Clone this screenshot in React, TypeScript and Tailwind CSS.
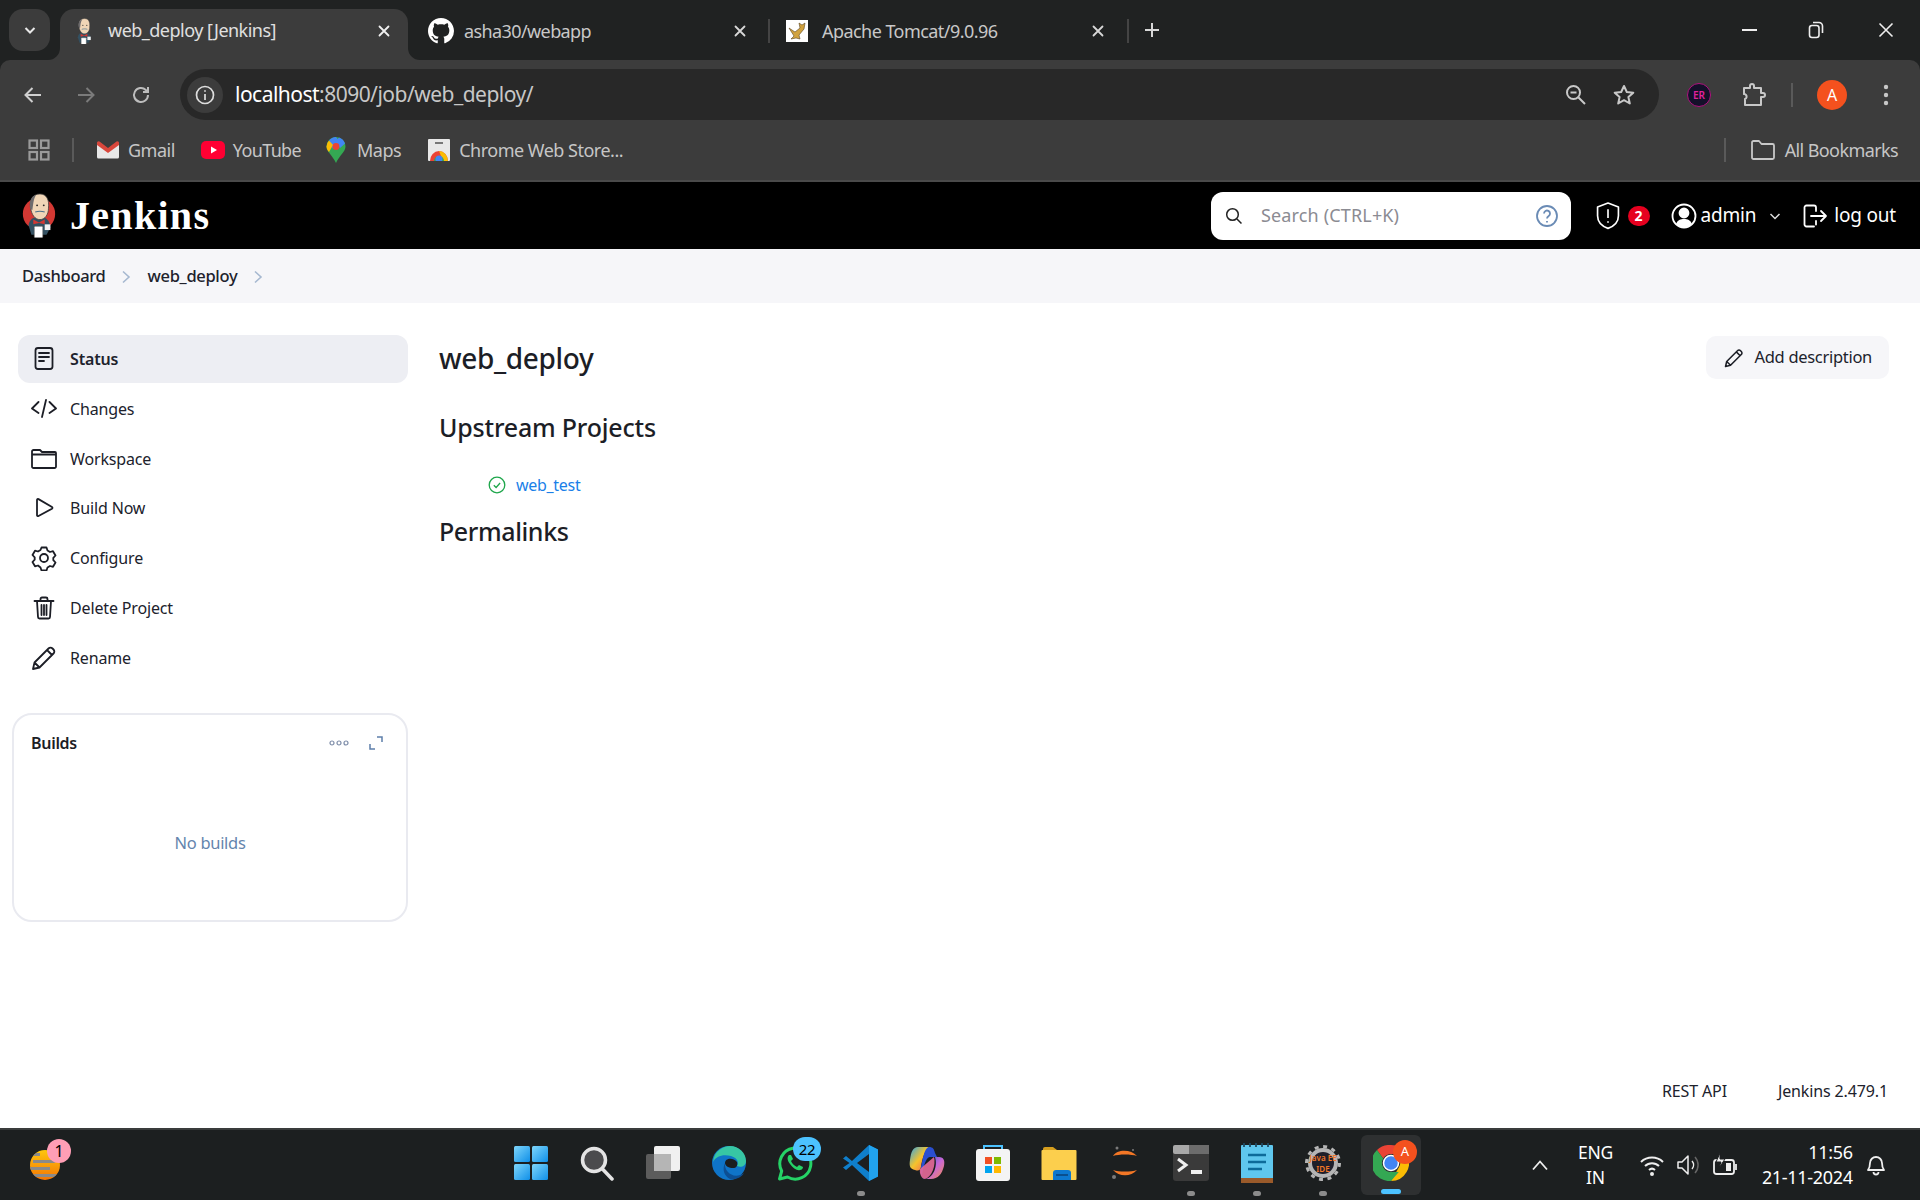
import React from "react";

const ui = "font-['Noto_Sans',sans-serif]";

function JenkinsHead({ size = 40, plain = false }: { size?: number; plain?: boolean }) {
  return (
    <svg width={size} height={plain ? 26 : size * 1.2} viewBox={plain ? "3 0 34 46" : "0 0 40 48"}>
      {!plain && <circle cx="20" cy="22" r="17" fill="#d33833" />}
      <path d="M9 34 C10 27 15 25 20 25 C26 25 31 27 32 36 L28 44 L12 44 Z" fill="#335061" />
      <path d="M11 15 C10 6 14 1 21 1 C28 1 31 7 30 16 C30 23 26 28 21 28 C16 28 12 23 11 15 Z" fill="#f0d6b7" stroke="#3a3a3a" strokeWidth="0.8" />
      <path d="M11 17 C9 9 12 3 17 2 C14 6 14 12 13 18 Z" fill="#6d6b6d" />
      <path d="M16 20 C19 19 23 19 26 20" stroke="#49728b" strokeWidth="1.2" fill="none" />
      <circle cx="18" cy="13" r="1" fill="#2a2a2a" />
      <circle cx="25" cy="13" r="1" fill="#2a2a2a" />
      <path d="M14 28 L20 31 L26 28 L26 33 L20 31.5 L14 33 Z" fill="#d33833" />
      <rect x="15" y="35" width="9" height="12" rx="1" fill="#ffffff" stroke="#555" strokeWidth="0.6" />
      <rect x="26" y="33" width="6" height="6" fill="#f2f2f2" />
    </svg>
  );
}

function GitHubMark() {
  return (
    <svg width="26" height="26" viewBox="0 0 16 16" fill="#fff">
      <path d="M8 0C3.58 0 0 3.58 0 8c0 3.54 2.29 6.53 5.47 7.59.4.07.55-.17.55-.38 0-.19-.01-.82-.01-1.49-2.01.37-2.53-.49-2.69-.94-.09-.23-.48-.94-.82-1.13-.28-.15-.68-.52-.01-.53.63-.01 1.08.58 1.23.82.72 1.21 1.87.87 2.33.66.07-.52.28-.87.51-1.07-1.78-.2-3.64-.89-3.64-3.95 0-.87.31-1.59.82-2.15-.08-.2-.36-1.02.08-2.12 0 0 .67-.21 2.2.82.64-.18 1.32-.27 2-.27s1.36.09 2 .27c1.53-1.04 2.2-.82 2.2-.82.44 1.1.16 1.92.08 2.12.51.56.82 1.27.82 2.15 0 3.07-1.87 3.75-3.65 3.95.29.25.54.73.54 1.48 0 1.07-.01 1.93-.01 2.2 0 .21.15.46.55.38A8.01 8.01 0 0 0 16 8c0-4.42-3.58-8-8-8z" />
    </svg>
  );
}

function CloseX({ c = "#d8d8d8" }: { c?: string }) {
  return (
    <svg width="14" height="14" viewBox="0 0 14 14" stroke={c} strokeWidth="1.8" strokeLinecap="round">
      <path d="M2.5 2.5l9 9M11.5 2.5l-9 9" />
    </svg>
  );
}

function TabGithub() {
  return (
    <div className="flex h-[48px] w-[362px] shrink-0 items-center pb-[10px] pl-[20px]">
      <GitHubMark />
      <span className="ml-[10px] flex-1 text-[18px] tracking-[-0.6px] text-[#c8c8c8]">asha30/webapp</span>
      <CloseX />
      <div className="ml-[21px] h-[24px] w-[2px] bg-[#444444]" />
    </div>
  );
}

function TabTomcat() {
  return (
    <div className="flex h-[48px] w-[359px] shrink-0 items-center pb-[10px] pl-[16px]">
      <svg width="22" height="22" viewBox="0 0 22 22">
        <rect width="22" height="22" fill="#fff" />
        <path d="M3 8L8 16 5 19 10 18 14 19 13 15 18 9 19 3 16 5 13 3 14 8 9 12z" fill="#d1a23e" stroke="#5b4520" strokeWidth="0.6" />
      </svg>
      <span className="ml-[14px] flex-1 text-[18px] tracking-[-0.55px] text-[#c8c8c8]">Apache Tomcat/9.0.96</span>
      <CloseX />
      <div className="ml-[22px] h-[24px] w-[2px] bg-[#444444]" />
    </div>
  );
}

function TopChrome() {
  return (
    <div className={`${ui} shrink-0 bg-[#202222]`}>
      {/* tab strip */}
      <div className="flex h-[60px] items-end pl-[9px]">
        <div className="mb-[9px] flex h-[42px] w-[41px] items-center justify-center rounded-[14px] bg-[#3c3c3c]">
          <svg width="14" height="14" viewBox="0 0 14 14" fill="none" stroke="#e8e8e8" strokeWidth="2"><path d="M2.5 5l4.500 4.500L11.500 5" /></svg>
        </div>
        <div className="relative ml-[10px] flex h-[51px] w-[348px] items-center rounded-t-[14px] bg-[#3c3c3c] pb-[8px] pl-[14px] pr-[17px]">
          <svg className="absolute bottom-0 left-[-12px]" width="12" height="12" viewBox="0 0 12 12" fill="#3c3c3c"><path d="M12 0v12H0A12 12 0 0 0 12 0z" /></svg>
          <svg className="absolute bottom-0 right-[-12px]" width="12" height="12" viewBox="0 0 12 12" fill="#3c3c3c"><path d="M0 0v12h12A12 12 0 0 1 0 0z" /></svg>
          <JenkinsHead size={20} plain />
          <span className="ml-[14px] flex-1 text-[18px] tracking-[-0.52px] text-[#e0e0e0]">web_deploy [Jenkins]</span>
          <CloseX c="#f0f0f0" />
        </div>
        <TabGithub />
        <TabTomcat />
        <div className="mb-[9px] ml-[6px] flex h-[42px] w-[34px] items-center justify-center">
          <svg width="18" height="18" viewBox="0 0 18 18" stroke="#d8d8d8" strokeWidth="2"><path d="M9 2v14M2 9h14" /></svg>
        </div>
        <div className="mb-[21px] ml-auto flex items-center text-white">
          <div className="flex w-[62px] justify-center"><div className="h-[2px] w-[15px] bg-[#eeeeee]" /></div>
          <div className="flex w-[72px] justify-center">
            <svg width="16" height="18" viewBox="0 0 16 18" fill="none" stroke="#eee" strokeWidth="1.6">
              <rect x="1.500" y="4.500" width="9.500" height="12" rx="2.500" /><path d="M5 1.500h6a3.500 3.500 0 0 1 3.500 3.500v7" />
            </svg>
          </div>
          <div className="flex w-[68px] justify-center">
            <svg width="18" height="18" viewBox="0 0 18 18" stroke="#eee" strokeWidth="1.6"><path d="M2.500 2.500l13 13M15.500 2.500l-13 13" /></svg>
          </div>
        </div>
      </div>
      {/* toolbar */}
      <div className="rounded-t-[10px] bg-[#3c3c3c]">
        <div className="flex h-[69px] items-center">
          <svg className="ml-[22px]" width="22" height="22" viewBox="0 0 22 22" fill="none" stroke="#cfcfcf" strokeWidth="2"><path d="M19 11H4M10.500 4L3.500 11l7 7" /></svg>
          <svg className="ml-[31px]" width="22" height="22" viewBox="0 0 22 22" fill="none" stroke="#7b7b7b" strokeWidth="2"><path d="M3 11h15M11.500 4l7 7-7 7" /></svg>
          <svg className="ml-[33px]" width="22" height="22" viewBox="0 0 22 22" fill="none" stroke="#bdbdbd" strokeWidth="2"><path d="M18 11a7 7 0 1 1-2.200-5.100L18 8M18 3v5h-5" /></svg>
          <div className="ml-[28px] flex h-[51px] w-[1479px] shrink-0 items-center rounded-full bg-[#282828] pl-[7px] pr-[23px]">
            <div className="flex h-[36px] w-[36px] shrink-0 items-center justify-center rounded-full bg-[#3c3c3c]">
              <svg width="22" height="22" viewBox="0 0 22 22" fill="none" stroke="#dedede" strokeWidth="1.700">
                <circle cx="11" cy="11" r="8.500" /><path d="M11 10v6M11 6.200v1.600" />
              </svg>
            </div>
            <span className="ml-[12px] text-[21px] tracking-[-0.52px] text-[#c7c7c7]"><span className="text-white">localhost</span>:8090/job/web_deploy/</span>
            <svg className="ml-auto" width="24" height="24" viewBox="0 0 24 24" fill="none" stroke="#c8c8c8" strokeWidth="2">
              <circle cx="9.500" cy="9.500" r="6.500" /><path d="M14.500 14.500L21 21M6.500 9.500h6" />
            </svg>
            <svg className="ml-[24px]" width="24" height="24" viewBox="0 0 24 24" fill="none" stroke="#c8c8c8" strokeWidth="2" strokeLinejoin="round">
              <path d="M12 3l2.800 6 6.500.7-4.900 4.400 1.400 6.400L12 17.200 6.200 20.500l1.400-6.400L2.700 9.700 9.200 9z" />
            </svg>
          </div>
          <div className="ml-[28px] flex h-[24px] w-[24px] items-center justify-center rounded-full border border-[#b0127f] bg-[#14102a]">
            <span className="text-[10px] font-semibold leading-none text-[#e0219c]">ER</span>
          </div>
          <svg className="ml-[28px]" width="28" height="28" viewBox="0 0 28 28" fill="none" stroke="#c8c8c8" strokeWidth="2" strokeLinejoin="round">
            <path d="M5 7h6V5a2 2 0 0 1 4 0v2h7v5h2a2 2 0 0 1 0 4h-2v8H6v-6a2.500 2.500 0 0 0 1-4 2 2 0 0 0-2-1z" />
          </svg>
          <div className="ml-[24px] h-[24px] w-[2px] bg-[#5a5a5a]" />
          <div className="ml-[24px] flex h-[30px] w-[30px] items-center justify-center rounded-full bg-[#f4511e] text-[16px] text-white">A</div>
          <svg className="ml-[36px]" width="6" height="24" viewBox="0 0 6 24" fill="#c8c8c8">
            <circle cx="3" cy="4" r="2.200" /><circle cx="3" cy="12" r="2.200" /><circle cx="3" cy="20" r="2.200" />
          </svg>
        </div>
        {/* bookmarks */}
        <div className="flex h-[51px] items-center pb-[9px] pl-[28px] pr-[22px] text-[18px] tracking-[-0.5px] text-[#c6c6c6]">
          <svg width="22" height="22" viewBox="0 0 22 22" fill="none" stroke="#9a9a9a" strokeWidth="2.200">
            <rect x="1.500" y="1.500" width="7.500" height="7.500" /><rect x="13" y="1.500" width="7.500" height="7.500" /><rect x="1.500" y="13" width="7.500" height="7.500" /><rect x="13" y="13" width="7.500" height="7.500" />
          </svg>
          <div className="ml-[22px] h-[24px] w-[2px] bg-[#5a5a5a]" />
          <svg className="ml-[23px]" width="22" height="18" viewBox="0 0 22 18">
            <path d="M0 2L11 10 22 2V16a1.500 1.500 0 0 1-1.500 1.500h-19A1.500 1.500 0 0 1 0 16z" fill="#e8e8e8" />
            <path d="M0 2a1.600 1.600 0 0 1 2.500-1.400L11 7 19.500.6A1.600 1.600 0 0 1 22 2v2L11 12 0 4z" fill="#d9473c" />
          </svg>
          <span className="ml-[9px]">Gmail</span>
          <svg className="ml-[26px]" width="24" height="18" viewBox="0 0 24 18">
            <rect width="24" height="18" rx="5" fill="#ff0033" /><path d="M10 5.500v7l6-3.500z" fill="#fff" />
          </svg>
          <span className="ml-[8px] tracking-[-0.65px]">YouTube</span>
          <svg className="ml-[25px]" width="20" height="26" viewBox="0 0 20 26">
            <path d="M10 0a9.500 9.500 0 0 1 9.500 9.500c0 5-6 9-9.500 16.500C6.500 18.500.5 14.500.5 9.500A9.500 9.500 0 0 1 10 0z" fill="#34a853" />
            <path d="M3 3.500A9.500 9.500 0 0 1 10 0l3 4-6 8z" fill="#4285f4" />
            <path d="M.5 9.500A9.500 9.500 0 0 1 3 3.500L7 8l-4 7C1.500 13.500.5 11.500.5 9.500z" fill="#fbbc04" />
            <path d="M13 .5a9.500 9.500 0 0 1 6 6L14 11 9 5z" fill="#4285f4" />
            <circle cx="10" cy="9.500" r="3.400" fill="#ea4335" />
          </svg>
          <span className="ml-[11px]">Maps</span>
          <svg className="ml-[27px]" width="22" height="22" viewBox="0 0 22 22">
            <rect width="22" height="22" rx="1" fill="#e8e8e8" /><rect x="7" y="3" width="8" height="2" fill="#777" />
            <path d="M2 22a9 10 0 0 1 18 0z" fill="#ea4335" /><path d="M11 12a9 10 0 0 1 9 10h-5z" fill="#fbbc04" /><path d="M6 22a5 5 0 0 1 10 0z" fill="#34a853" /><circle cx="11" cy="20" r="3.500" fill="#4285f4" />
          </svg>
          <span className="ml-[9px]">Chrome Web Store...</span>
          <div className="ml-auto h-[24px] w-[2px] bg-[#5a5a5a]" />
          <svg className="ml-[25px]" width="24" height="20" viewBox="0 0 24 20" fill="none" stroke="#c8c8c8" strokeWidth="1.800" strokeLinejoin="round">
            <path d="M1 2.500a1.500 1.500 0 0 1 1.500-1.500H8l2.500 3h11A1.500 1.500 0 0 1 23 5.500v12a1.500 1.500 0 0 1-1.500 1.500h-19A1.500 1.500 0 0 1 1 17.500z" />
          </svg>
          <span className="ml-[10px] tracking-[-0.6px]">All Bookmarks</span>
        </div>
      </div>
      <div className="h-[2px] bg-[#4a4a4a]" />
    </div>
  );
}

function JenkinsHeader() {
  return (
    <header className={`${ui} flex h-[67px] shrink-0 items-center bg-black pl-[20px] pr-[24px] text-white`}>
      <JenkinsHead size={38} />
      <span className="ml-[12px] font-['Liberation_Serif',serif] text-[40px] font-bold leading-none tracking-[1.3px]">Jenkins</span>
      <div className="ml-auto flex h-[48px] w-[360px] items-center rounded-[12px] bg-white pl-[14px] pr-[12px]">
        <svg width="18" height="18" viewBox="0 0 18 18" fill="none" stroke="#222" strokeWidth="1.500"><circle cx="7.500" cy="7.500" r="5.800" /><path d="M12 12l4.500 4.500" /></svg>
        <span className="ml-[18px] flex-1 text-[18px] tracking-[0.15px] text-[#8b8b92]">Search (CTRL+K)</span>
        <svg width="24" height="24" viewBox="0 0 24 24" fill="none" stroke="#6a8bb5" strokeWidth="1.800">
          <circle cx="12" cy="12" r="10" /><path d="M9 9.500a3 3 0 1 1 4.700 2.500c-1 .7-1.700 1.200-1.700 2.500M12 17v1.500" />
        </svg>
      </div>
      <svg className="ml-[23.500px]" width="26" height="28" viewBox="2.500 0.500 21 25.500" fill="none" stroke="#fff" strokeWidth="1.500" strokeLinejoin="round">
        <path d="M13 1.500l9.500 3.500v8c0 5.500-4 9.500-9.500 11.500C7.500 22.500 3.500 18.500 3.500 13V5zM13 7v8M13 18v1.500" />
      </svg>
      <div className="ml-[7px] flex h-[20px] w-[22px] items-center justify-center rounded-full bg-[#e6001f] text-[14px] font-bold">2</div>
      <svg className="ml-[21px]" width="26" height="26" viewBox="0 0 26 26" fill="none" stroke="#fff" strokeWidth="1.800">
        <circle cx="13" cy="13" r="11.500" /><circle cx="13" cy="10" r="4.500" fill="#fff" /><path d="M5 21c1.500-4 4.500-5 8-5s6.500 1 8 5c-2 2-5 3.500-8 3.500S7 23 5 21z" fill="#fff" stroke="none" />
      </svg>
      <span className="ml-[4px] text-[19px] tracking-[-0.2px]">admin</span>
      <svg className="ml-[12px]" width="14" height="14" viewBox="0 0 14 14" fill="none" stroke="#ddd" strokeWidth="1.500"><path d="M2.500 5l4.500 4.500L11.500 5" /></svg>
      <svg className="ml-[21px]" width="25" height="24" viewBox="0 0 25 24" fill="none" stroke="#fff" strokeWidth="1.800" strokeLinecap="round" strokeLinejoin="round">
        <path d="M11 22.500H3.500a2 2 0 0 1-2-2v-17a2 2 0 0 1 2-2H11a2 2 0 0 1 2 2V7M13 17v3.500M8 12h15M18 7l5 5-5 5" />
      </svg>
      <span className="ml-[6px] text-[19px] tracking-[-0.2px]">log out</span>
    </header>
  );
}

function Breadcrumb() {
  const chev = (
    <svg width="10" height="14" viewBox="0 0 10 14" fill="none" stroke="#a6b8d0" strokeWidth="1.600"><path d="M2 1.500L8 7l-6 5.500" /></svg>
  );
  return (
    <div className={`${ui} flex h-[54px] shrink-0 items-center bg-[#f6f6f9] pl-[22px] pt-[1px] text-[16.500px] font-medium tracking-[-0.33px] text-[#20222c]`}>
      <span>Dashboard</span>
      <span className="ml-[15px]">{chev}</span>
      <span className="ml-[17px]">web_deploy</span>
      <span className="ml-[16px]">{chev}</span>
    </div>
  );
}

const stroke = { fill: "none", stroke: "#1c1e26", strokeWidth: 1.8, strokeLinecap: "round", strokeLinejoin: "round" } as const;

const items: { label: string; icon: React.ReactNode; active?: boolean }[] = [
  { label: "Status", active: true, icon: <g {...stroke}><rect x="4.500" y="2" width="17" height="21" rx="2.500" /><path d="M8 7h10M8 11h10M8 15h5" /></g> },
  { label: "Changes", icon: <g {...stroke}><path d="M7.500 6L1 12.500 7.500 17M18.500 6l6.500 6.500-6.500 4.500M15 4l-4 17" /></g> },
  { label: "Workspace", icon: <g {...stroke}><path d="M1 5.500A1.500 1.500 0 0 1 2.500 4H9l2 2h13a1 1 0 0 1 1 1v13.500a1.500 1.500 0 0 1-1.500 1.500h-21A1.500 1.500 0 0 1 1 20.500zM1 8.500h24" /></g> },
  { label: "Build Now", icon: <g {...stroke}><path d="M6 5a1 1 0 0 1 1.500-.9L21 12a1 1 0 0 1 0 1.700L7.500 21a1 1 0 0 1-1.500-.9z" /></g> },
  { label: "Configure", icon: <g {...stroke}><circle cx="13" cy="13" r="4" /><path d="M10.500 2.500h5l1 3 2.500 1.500 3-.8 2.500 4.300-2.200 2.300v2.400l2.200 2.300-2.500 4.300-3-.8-2.500 1.500-1 3h-5l-1-3L7 20.500l-3 .8-2.500-4.300L3.700 14.700v-2.400L1.500 10l2.500-4.300 3 .8 2.500-1.500z" /></g> },
  { label: "Delete Project", icon: <g {...stroke}><path d="M3.500 6h19M9.500 6V4a1.500 1.500 0 0 1 1.500-1.500h4A1.500 1.500 0 0 1 16.500 4v2M6 6l1 16a1.500 1.500 0 0 0 1.500 1.500h9A1.500 1.500 0 0 0 19 22l1-16M10.500 10v10M13 10v10M15.500 10v10" /></g> },
  { label: "Rename", icon: <g {...stroke}><path d="M2 24l1.500-6.500L17.500 3.500a2.800 2.800 0 0 1 4 0l1 1a2.800 2.800 0 0 1 0 4L8.500 22.500zM3.500 17.500l5 5M16 5l5 5" /></g> },
];

function Sidebar() {
  return (
    <aside className="w-[439px] shrink-0 pt-[32px]">
      <nav className="ml-[18px] w-[390px]">
        {items.map((it) => (
          <div
            key={it.label}
            className={`mb-[1.8px] flex h-[48px] items-center rounded-[12px] pl-[13px] text-[16px] tracking-[-0.15px] text-[#20222c] ${it.active ? "bg-[#edeef3] font-semibold" : ""}`}
          >
            <svg width="26" height="26" viewBox="0 0 26 26" className="shrink-0">{it.icon}</svg>
            <span className="ml-[13px]">{it.label}</span>
          </div>
        ))}
      </nav>
      <section className="ml-[12px] mt-[31px] h-[209px] w-[396px] rounded-[20px] border-2 border-[#e9eaf0] px-[17px] pt-[16px]">
        <div className="flex items-center">
          <span className="text-[16px] font-semibold tracking-[-0.3px] text-[#1c1e26]">Builds</span>
          <svg className="ml-auto" width="20" height="8" viewBox="0 0 20 8" fill="none" stroke="#7d8ca8" strokeWidth="1.200">
            <circle cx="3" cy="4" r="2" /><circle cx="10" cy="4" r="2" /><circle cx="17" cy="4" r="2" />
          </svg>
          <svg className="ml-[20px] mr-[6px]" width="14" height="14" viewBox="0 0 14 14" fill="none" stroke="#5d7faa" strokeWidth="1.500">
            <path d="M8 1h5v5M1 8v5h5" />
          </svg>
        </div>
        <div className="mt-[76px] text-center text-[16.500px] tracking-[-0.3px] text-[#6485ad]">No builds</div>
      </section>
    </aside>
  );
}

function Main() {
  return (
    <main className="flex min-w-0 flex-1 flex-col pr-[31px] pt-[32px] text-[#1c1e26]">
      <div className="flex h-[50px] items-start justify-between">
        <h1 className="text-[28px] font-[550] leading-[46px] tracking-[-0.35px]">web_deploy</h1>
        <button className="mt-[1px] flex h-[43px] items-center rounded-[10px] bg-[#f6f6f9] pl-[18px] pr-[17px] text-[16.500px] tracking-[-0.3px] text-[#20222c]">
          <svg width="20" height="20" viewBox="0 0 26 26">
            <path d="M2 24l1.500-6.500L17.500 3.500a2.800 2.800 0 0 1 4 0l1 1a2.800 2.800 0 0 1 0 4L8.500 22.500zM3.500 17.500l5 5M16 5l5 5" fill="none" stroke="#1c1e26" strokeWidth="2" strokeLinejoin="round" />
          </svg>
          <span className="ml-[10px]">Add description</span>
        </button>
      </div>
      <h2 className="mt-[24px] text-[25px] font-[550] leading-[36px] tracking-[-0.2px]">Upstream Projects</h2>
      <div className="mt-[28px] flex h-[24px] items-center pl-[49px]">
        <svg width="18" height="18" viewBox="0 0 18 18" fill="none" stroke="#1ea64b" strokeWidth="1.300">
          <circle cx="9" cy="9" r="7.800" /><path d="M5.800 9.300l2.300 2.200 4-4.500" />
        </svg>
        <a className="ml-[10px] text-[16px] tracking-[-0.3px] text-[#1a7fe8]">web_test</a>
      </div>
      <h2 className="mt-[16px] text-[25px] font-[550] leading-[36px] tracking-[-0.4px]">Permalinks</h2>
      <div className="mr-[1px] mt-auto flex justify-end pb-[25px] text-[16px] tracking-[-0.13px] text-[#20222c]">
        <span>REST API</span>
        <span className="ml-[51px]">Jenkins 2.479.1</span>
      </div>
    </main>
  );
}

const dock: React.ReactNode[] = [
  <svg key="win" width="36" height="36" viewBox="0 0 36 36">
    <defs><linearGradient id="w" x1="0" y1="0" x2="1" y2="1"><stop offset="0" stopColor="#7fd6fb" /><stop offset="1" stopColor="#0f8fe8" /></linearGradient></defs>
    <rect x="1" y="1" width="16" height="16" rx="1.500" fill="url(#w)" /><rect x="19" y="1" width="16" height="16" rx="1.500" fill="url(#w)" /><rect x="1" y="19" width="16" height="16" rx="1.500" fill="url(#w)" /><rect x="19" y="19" width="16" height="16" rx="1.500" fill="url(#w)" />
  </svg>,
  <svg key="search" width="36" height="36" viewBox="0 0 36 36" fill="#4b4b4d" stroke="#e4e4e4" strokeWidth="3.500">
    <circle cx="15" cy="15" r="11.500" /><path d="M23.500 24L33 34" strokeLinecap="round" />
  </svg>,
  <svg key="tv" width="36" height="36" viewBox="0 0 36 36">
    <rect x="1" y="9" width="25" height="25" rx="2" fill="#5c5c5c" /><rect x="9" y="1" width="26" height="25" rx="2" fill="#f0f0f0" /><rect x="9" y="9" width="17" height="17" fill="#b5b5b5" />
  </svg>,
  <svg key="edge" width="36" height="36" viewBox="0 0 36 36">
    <circle cx="18" cy="18" r="17" fill="#0f74c8" /><path d="M2 17C3 6 12 1 19 1c9 0 16 7 16 15 0 5-5 7-9 5 2-3 1-8-6-10C12 9 5 11 2 17z" fill="#37c6a4" /><path d="M14 18c0-5 8-6 12-1 1 4-1 6-4 6-4 0-8-2-8-5z" fill="#1b1e20" /><path d="M14 18c-1 9 9 17 19 10-3 5-9 7-14 6-6-3-8-10-5-16z" fill="#0c4f94" />
  </svg>,
  <div key="wa" className="relative">
    <svg width="36" height="36" viewBox="0 0 36 36" fill="none">
      <path d="M2.500 34l2.200-8A15.500 15.500 0 1 1 10.500 32z" stroke="#25d366" strokeWidth="3" strokeLinejoin="round" />
      <path d="M12 10c-2 2-2 5 1 9s7 7 10 6c2 0 3-2 3-3l-4-2-2 2c-2-1-5-3-6-6l2-2-2-4z" fill="#25d366" />
    </svg>
    <div className="absolute left-[16px] top-[-8px] flex h-[24px] w-[28px] items-center justify-center rounded-full bg-[#4cc2ff] text-[15px] tracking-[-0.3px] text-black">22</div>
  </div>,
  <svg key="vs" width="36" height="38" viewBox="0 0 36 38">
    <path d="M26 1l9 4.500v27L26 37 9 21 3 26 0 23.500 6.500 19 0 14.500 3 12l6 5z" fill="#0f7fcc" /><path d="M26 1l9 4.500v27L26 37z" fill="#21a3ef" /><path d="M26 10L14 19l12 9z" fill="#1d1f21" />
  </svg>,
  <svg key="cop" width="36" height="36" viewBox="0 0 36 36">
    <defs><linearGradient id="c" x1="0" y1="0" x2="1" y2="1"><stop offset="0" stopColor="#30a5e8" /><stop offset="0.5" stopColor="#f5c32c" /><stop offset="1" stopColor="#f45a5a" /></linearGradient><linearGradient id="d" x1="0" y1="0" x2="1" y2="1"><stop offset="0" stopColor="#2f5fd8" /><stop offset="0.5" stopColor="#c867d8" /><stop offset="1" stopColor="#f58d4a" /></linearGradient></defs>
    <path d="M9 2h11c-4 3-7 12-8 20-1 4-3 4-6 3-5-1-6-4-5-10C2 7 4 2 9 2z" fill="url(#c)" /><path d="M16 34C24 33 29 22 26 12h4c5 0 6 4 5 9-2 8-6 13-13 13z" fill="url(#d)" /><path d="M20 2c4 0 5 2 6 6l2 4h-7c-3 0-5 5-7 13-1 4-2 9 2 9-4-2-5-6-4-12C14 14 15 3 20 2z" fill="#2a4fd0" /><path d="M11 24l14-12c2 8-2 20-9 22-3 0-6-5-5-10z" fill="#e86a9a" opacity="0.9" />
  </svg>,
  <svg key="store" width="36" height="38" viewBox="0 0 36 38">
    <path d="M9 6V2h18v4" fill="none" stroke="#4cc2ff" strokeWidth="2" /><rect x="1" y="5" width="34" height="32" rx="3" fill="#f4f4f4" />
    <rect x="10" y="13" width="7" height="7" fill="#f25022" /><rect x="19" y="13" width="7" height="7" fill="#7fba00" /><rect x="10" y="22" width="7" height="7" fill="#00a4ef" /><rect x="19" y="22" width="7" height="7" fill="#ffb900" />
  </svg>,
  <svg key="files" width="36" height="34" viewBox="0 0 36 34">
    <path d="M2 3a2 2 0 0 1 2-2h8l4 3H2z" fill="#d59e1e" /><rect x="0.500" y="4" width="35" height="30" rx="1" fill="#fccf4d" /><path d="M12 34v-7a3 3 0 0 1 3-3h12a3 3 0 0 1 3 3v7z" fill="#0d78cf" /><rect x="15" y="28" width="12" height="2" fill="#0a4f8e" />
  </svg>,
  <svg key="jup" width="36" height="36" viewBox="0 0 36 36">
    <path d="M6 11c4-7 18-7 24 0-6-2-18-2-24 0zM6 25c6 7 18 7 24 0-6 2-18 2-24 0z" fill="#f37726" /><circle cx="10" cy="3" r="1.500" fill="#7a7a7a" /><circle cx="26" cy="5" r="1" fill="#7a7a7a" /><circle cx="7" cy="32" r="2" fill="#7a7a7a" />
  </svg>,
  <svg key="term" width="36" height="36" viewBox="0 0 36 36">
    <rect width="36" height="36" rx="3" fill="#3a3a3a" /><rect width="36" height="9" rx="2" fill="#a8a8a8" /><rect x="16" width="20" height="9" fill="#6c6c6c" /><path d="M5 14l8 6-8 6" fill="none" stroke="#f0f0f0" strokeWidth="3" /><rect x="18" y="25" width="11" height="4" fill="#f0f0f0" />
  </svg>,
  <svg key="note" width="32" height="40" viewBox="0 0 32 40">
    <rect y="2" width="32" height="37" rx="1" fill="#5fc7ee" /><rect y="35" width="32" height="5" fill="#9a5a2a" /><path d="M3 0v4M9 0v4M15 0v4M21 0v4M27 0v4" stroke="#1f4a62" strokeWidth="1.800" />
    <path d="M7 12h18M7 19h18M7 26h14" stroke="#0d6b9a" strokeWidth="2.500" />
  </svg>,
  <div key="java" className="relative flex h-[36px] w-[36px] items-center justify-center">
    <svg width="36" height="36" viewBox="0 0 36 36" className="absolute inset-0">
      <circle cx="18" cy="18" r="13" fill="#1f1f2a" stroke="#b5b5b5" strokeWidth="4" />
      <circle cx="18" cy="18" r="16.500" fill="none" stroke="#b5b5b5" strokeWidth="3" strokeDasharray="4 4.600" />
    </svg>
    <span className="relative text-center text-[8px] font-semibold leading-[11px] text-[#f37726]">Java EE<br />IDE</span>
  </div>,
];

function Taskbar() {
  const dotted = new Set([5, 10, 11, 12]);
  return (
    <footer className={`${ui} relative flex h-[72px] shrink-0 items-center border-t-2 border-[#3a3c3c] bg-[#1c1f20] text-white`}>
      <div className="absolute left-[30px] top-[20px] h-[30px] w-[30px] overflow-hidden rounded-full bg-gradient-to-b from-[#fdc60e] to-[#f27405]">
        <div className="ml-[2px] mt-[3px] h-[3px] w-[8px] bg-[#8a8a8a]" />
        <div className="ml-[3px] mt-[4px] h-[3px] w-[22px] bg-[#8a8a8a]" />
        <div className="mt-[4px] h-[3px] w-[20px] bg-[#8a8a8a]" />
        <div className="mt-[4px] h-[3px] w-[30px] bg-[#8a8a8a]" />
      </div>
      <div className="absolute left-[47px] top-[9px] flex h-[24px] w-[24px] items-center justify-center rounded-full bg-[#ff9eb5] text-[16px] text-black">1</div>

      <div className="ml-[498px] flex h-full items-center">
        {dock.map((d, i) => (
          <div key={i} className="relative flex h-full w-[66px] items-center justify-center pb-[4px]">
            {d}
            {dotted.has(i) && <div className="absolute bottom-[4px] h-[5px] w-[8px] rounded-full bg-[#8c8c8c]" />}
          </div>
        ))}
        <div className="relative ml-[5px] flex h-[60px] w-[60px] items-center justify-center rounded-[6px] bg-[#2e3031] pb-[4px]">
          <svg width="36" height="36" viewBox="0 0 36 36">
            <path d="M18 0a18 18 0 0 1 15.600 9H18a9 9 0 0 0-7.800 4.500L4 5a18 18 0 0 1 14-5z" fill="#ea4335" />
            <path d="M33.600 9A18 18 0 0 1 18 36l7.800-13.500A9 9 0 0 0 26 13z" fill="#fbbc04" />
            <path d="M18 36A18 18 0 0 1 4 5l6.200 8.500a9 9 0 0 0 7.800 13.500h7.800z" fill="#34a853" />
            <circle cx="18" cy="18" r="7.500" fill="#4285f4" stroke="#fff" strokeWidth="1.500" />
          </svg>
          <div className="absolute left-[32px] top-[5px] flex h-[24px] w-[24px] items-center justify-center rounded-full bg-[#f4511e] text-[13px]">A</div>
          <div className="absolute bottom-[1px] h-[5px] w-[20px] rounded-full bg-[#4cc2ff]" />
        </div>
      </div>

      <svg className="ml-[110px]" width="18" height="12" viewBox="0 0 18 12" fill="none" stroke="#eee" strokeWidth="1.800"><path d="M2 10.500L9 2.500l7 8" /></svg>
      <div className="ml-[29px] text-center text-[17.500px] leading-[25px] tracking-[-0.3px]">ENG<br />IN</div>
      <svg className="ml-[26px]" width="26" height="22" viewBox="0 0 26 22" fill="none" stroke="#eee" strokeWidth="2">
        <path d="M2 8a16 16 0 0 1 22 0M6 12a10 10 0 0 1 14 0M10 16a4.500 4.500 0 0 1 6 0" /><circle cx="13" cy="20" r="1" fill="#eee" />
      </svg>
      <svg className="ml-[12px]" width="22" height="24" viewBox="0 0 22 24" fill="none" stroke="#eee" strokeWidth="1.500" strokeLinejoin="round">
        <path d="M1 9h4l6-6v18l-6-6H1zM15 8a6 6 0 0 1 0 8" /><path d="M18 4a12 12 0 0 1 0 16" stroke="#666" />
      </svg>
      <svg className="ml-[13px]" width="26" height="28" viewBox="0 0 26 28" fill="none" stroke="#eee" strokeWidth="1.800">
        <rect x="2" y="9" width="20" height="14" rx="2.500" /><rect x="14" y="12" width="5" height="8" fill="#eee" stroke="none" /><path d="M24 13v6" /><path d="M8 2L4 11h5l-2 6 6-9H8z" fill="#eee" stroke="#1c1f20" strokeWidth="1" />
      </svg>
      <div className="ml-[24px] text-right text-[18px] leading-[25px] tracking-[-0.3px]">11:56<br />21-11-2024</div>
      <svg className="ml-[12px]" width="22" height="26" viewBox="0 0 22 24" fill="none" stroke="#eee" strokeWidth="1.800" strokeLinejoin="round">
        <path d="M3 17c1.500-2 2-3 2-7a6 6 0 0 1 12 0c0 4 .5 5 2 7zM8.500 19a2.500 2.500 0 0 0 5 0" />
      </svg>
    </footer>
  );
}

export default function App() {
  return (
    <div className="flex h-[1200px] w-[1920px] flex-col overflow-hidden bg-white">
      <TopChrome />
      <JenkinsHeader />
      <Breadcrumb />
      <div className={`${ui} flex min-h-0 flex-1`}>
        <Sidebar />
        <Main />
      </div>
      <Taskbar />
    </div>
  );
}
